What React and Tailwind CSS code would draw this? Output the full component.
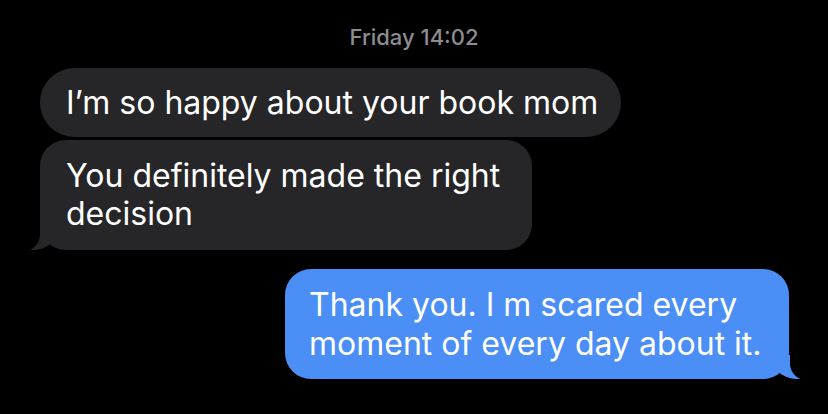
import React from "react";

function TailLeft({ color }) {
  return (
    <svg
      className="absolute left-[-10px] bottom-0"
      width="38"
      height="24"
      viewBox="0 0 38 24"
    >
      <path
        d="M10 0 L10 8 C10 15 6.5 20.5 0 24 C7 24.6 15 22.6 22 17 C26 21.5 31 23.6 38 24 L38 0 Z"
        fill={color}
      />
    </svg>
  );
}

function TailRight({ color }) {
  return (
    <svg
      className="absolute right-[-11px] bottom-0"
      width="38"
      height="24"
      viewBox="0 0 38 24"
    >
      <path
        d="M28 0 L28 8 C28 15 31.5 20.5 38 24 C31 24.6 23 22.6 16 17 C12 21.5 7 23.6 0 24 L0 0 Z"
        fill={color}
      />
    </svg>
  );
}

export default function App() {
  return (
    <div
      className="w-[828px] h-[414px] bg-black overflow-hidden"
      style={{ fontFamily: "Inter, 'Noto Sans', sans-serif" }}
    >
      {/* Timestamp */}
      <div className="pt-[24px] text-center text-[22px] leading-[26px] text-[#8d8d93] font-medium">
        Friday 14:02
      </div>

      {/* Incoming */}
      <div className="mt-[18px] pl-[40px] flex flex-col items-start gap-[3px]">
        <div className="rounded-[35px] bg-[#262628] text-white text-[32px] leading-[37px] pl-[26px] pr-[23px] py-[16px]">
          I’m so happy about your book mom
        </div>
        <div className="relative max-w-[492px] rounded-[26px] bg-[#262628] text-white text-[32px] leading-[38px] pl-[26px] pr-[22px] pt-[17px] pb-[17px]">
          You definitely made the right decision
          <TailLeft color="#262628" />
        </div>
      </div>

      {/* Outgoing */}
      <div className="mt-[19px] pr-[39px] flex justify-end">
        <div className="relative w-[504px] rounded-[26px] bg-[#4a8ef6] text-white text-[32px] leading-[39px] pl-[24px] pr-[14px] py-[16px]">
          Thank you. I m scared every moment of every day about it.
          <TailRight color="#4a8ef6" />
        </div>
      </div>
    </div>
  );
}
